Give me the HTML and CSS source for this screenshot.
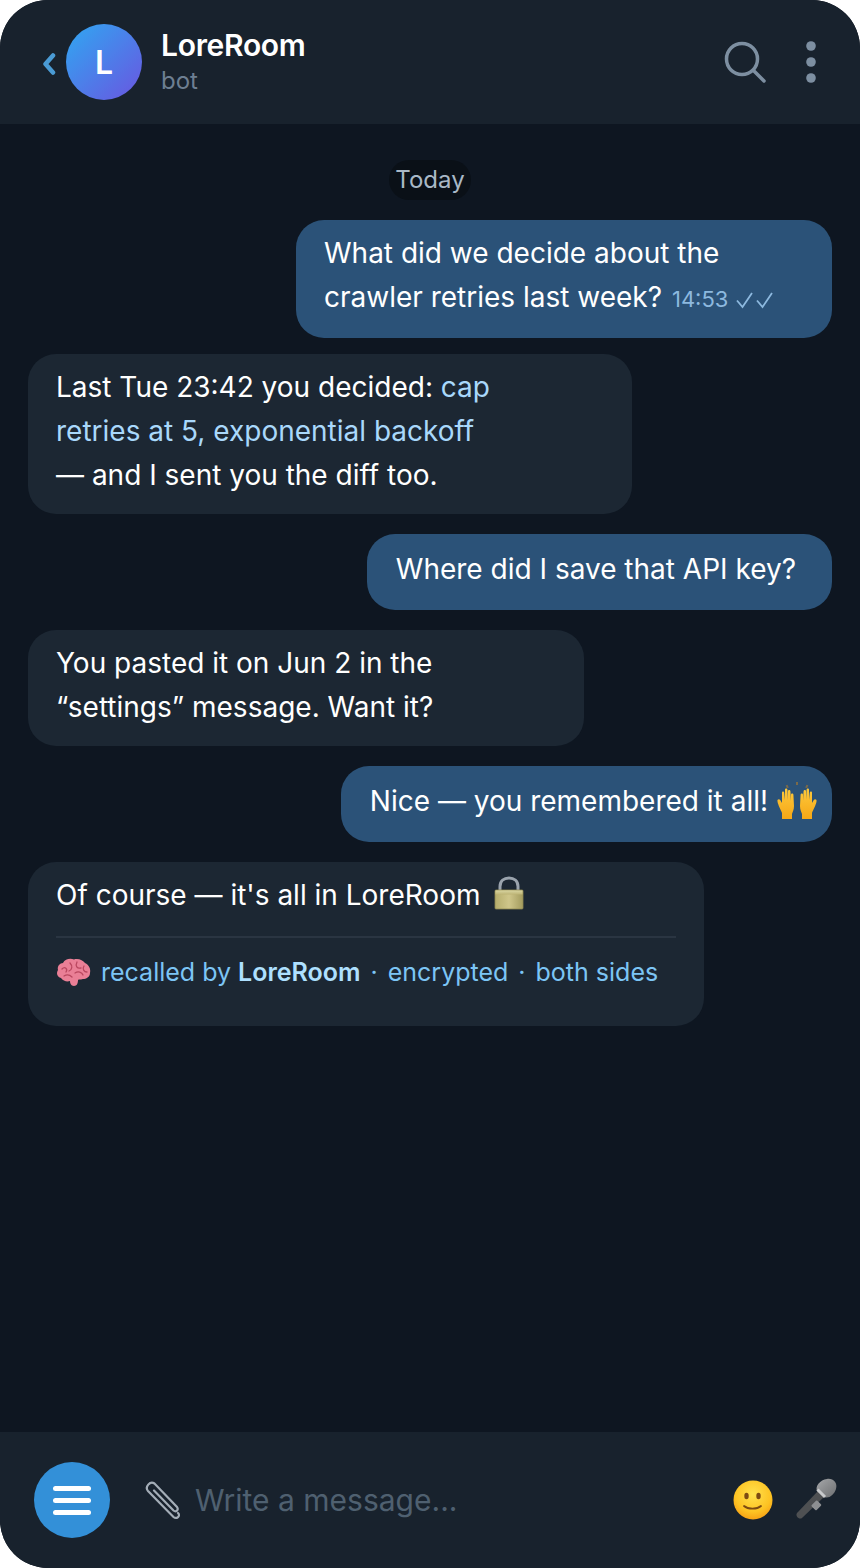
FILE: index.html
```html
<!DOCTYPE html>
<html>
<head>
<title>LoreRoom</title>
<link rel="stylesheet" href="styles.css">
</head>
<body>
<svg width="0" height="0" class="defs">
  <defs>
    <linearGradient id="lock-body" x1="0" y1="0" x2="1" y2="0">
      <stop offset="0" stop-color="#b5ad6c"/>
      <stop offset="0.5" stop-color="#cfc68a"/>
      <stop offset="1" stop-color="#a39b5e"/>
    </linearGradient>
    <linearGradient id="lock-top" x1="0" y1="0" x2="0" y2="1">
      <stop offset="0" stop-color="#d8d4a0"/>
      <stop offset="1" stop-color="#bdb475"/>
    </linearGradient>
    <radialGradient id="smile-face" cx="0.5" cy="0.35" r="0.7">
      <stop offset="0" stop-color="#ffe14d"/>
      <stop offset="0.65" stop-color="#fdc323"/>
      <stop offset="1" stop-color="#f59a12"/>
    </radialGradient>
    <linearGradient id="hand-fill" x1="0" y1="0" x2="0" y2="1">
      <stop offset="0" stop-color="#fdc93c"/>
      <stop offset="1" stop-color="#f6a716"/>
    </linearGradient>
    <linearGradient id="mic-head" x1="0" y1="0" x2="1" y2="1">
      <stop offset="0" stop-color="#a5a7a9"/>
      <stop offset="1" stop-color="#6d6f71"/>
    </linearGradient>
  </defs>
</svg>

<div class="phone">
  <div class="topbar">
    <svg class="back" width="14" height="22" viewBox="0 0 14 22">
      <path d="M11 2.5 3.5 11 11 19.500" fill="none" stroke="#4a9bd4" stroke-width="4.500" stroke-linecap="round" stroke-linejoin="round"/>
    </svg>
    <div class="avatar">L</div>
    <div class="who">
      <div class="name">LoreRoom</div>
      <div class="status">bot</div>
    </div>
    <svg class="search" width="44" height="44" viewBox="0 0 44 44">
      <circle cx="19" cy="19" r="15.500" fill="none" stroke="#7d8fa1" stroke-width="3.500"/>
      <path d="M30.500 30.500 41 41" stroke="#7d8fa1" stroke-width="3.500" stroke-linecap="round"/>
    </svg>
    <svg class="more" width="10" height="42" viewBox="0 0 10 42">
      <circle cx="5" cy="5" r="4.800" fill="#7d8fa1"/>
      <circle cx="5" cy="21" r="4.800" fill="#7d8fa1"/>
      <circle cx="5" cy="37" r="4.800" fill="#7d8fa1"/>
    </svg>
  </div>

  <div class="chat">
    <div class="day"><span class="day-pill">Today</span></div>

    <div class="msg out w-536 tight">What did we decide about the<br>crawler retries last week? <span class="time">14:53</span>
      <svg class="ticks" width="38" height="18" viewBox="0 0 38 18">
        <path d="M1 9.500 6.500 16 16 2M21 9.500 26.500 16 36 2" fill="none" stroke="#8db9df" stroke-width="1.800"/>
      </svg>
    </div>

    <div class="msg in w-604">Last Tue 23:42 you decided: <span class="link">cap<br>retries at 5, exponential backoff</span><br>— and I sent you the diff too.</div>

    <div class="msg out single">Where did I save that API key?</div>

    <div class="msg in w-556">You pasted it on Jun 2 in the<br>“settings” message. Want it?</div>

    <div class="msg out single hands-row">Nice — you remembered it all!
      <svg class="hands" width="40" height="38" viewBox="0 0 40 38">
        <g fill="#7a6a4a">
          <rect x="9" y="3" width="2" height="3" transform="rotate(-25 10 4)"/>
          <rect x="19" y="0" width="2" height="3"/>
          <rect x="29" y="3" width="2" height="3" transform="rotate(25 30 4)"/>
        </g>
        <path id="hand" fill="url(#hand-fill)" d="M5 37V31C4 28 1 23 .5 19.500 0 17.500 2 16.500 3.200 18L5 21V10.500C5 9 7 9 7.200 10.500L8 18V7.500C8 6 10.300 6 10.400 7.500L11 18V9C11 7.500 13.300 7.500 13.400 9L14 19V12.500C14 11 16.300 11 16.400 12.500L17 24C17 28 15.500 30 15 32V37Z"/>
        <path fill="url(#hand-fill)" d="M35 37V31C36 28 39 23 39.500 19.500 40 17.500 38 16.500 36.800 18L35 21V10.500C35 9 33 9 32.800 10.500L32 18V7.500C32 6 29.700 6 29.600 7.500L29 18V9C29 7.500 26.700 7.500 26.600 9L26 19V12.500C26 11 23.700 11 23.600 12.500L23 24C23 28 24.500 30 25 32V37Z"/>
      </svg>
    </div>

    <div class="msg in w-676 recall">
      <div class="recall-text">Of course — it's all in LoreRoom
        <svg class="lock" width="30" height="34" viewBox="0 0 30 34">
          <path d="M6 16V10.500C6 5 10 2 15 2S24 5 24 10.500V16" fill="none" stroke="#9aa3ad" stroke-width="3"/>
          <rect x="1" y="14" width="28" height="19" rx="1" fill="url(#lock-body)" stroke="#8f8850" stroke-width="0.800"/>
          <rect x="1.500" y="14.500" width="27" height="4" fill="url(#lock-top)"/>
        </svg>
      </div>
      <div class="recall-foot">
        <svg class="brain" width="35" height="29" viewBox="0 0 35 29">
          <path d="M5 20C1 19 0 15 2 12 1 8 4 5 7 5 9 1 14 0 18 1.500 22 0 27 2 29 5 33 7 35 11 34 15 34 19 30 21 27 21 24 22 23 21 22 22 22 25 21 28 18 28 15 28 14 25 14 23 11 24 7 23 5 20Z" fill="#ea7f96"/>
          <path d="M6 11C9 8 12 11 10 14M14 5C17 8 16 12 13 13M21 4C19 8 21 11 25 10M28 8C26 11 28 14 31 14M19 15C22 13 26 14 27 17M8 18C11 16 14 17 16 19" fill="none" stroke="#b9475f" stroke-width="1.300" stroke-linecap="round"/>
        </svg>
        <span class="recall-line">recalled by <b>LoreRoom</b><span class="sep">·</span>encrypted<span class="sep">·</span>both sides</span>
      </div>
    </div>
  </div>

  <div class="composer">
    <div class="menu-btn">
      <span class="menu-line"></span>
      <span class="menu-line"></span>
      <span class="menu-line"></span>
    </div>
    <svg class="clip" width="40" height="40" viewBox="0 0 40 40">
      <path d="M33 33C36 36 31.500 39.500 28.500 37L3 11C-.5 7 5 .5 9.500 3.500L32 27C34 30 31 32.500 28.500 30.500L9 10.500" fill="none" stroke="#a3adb7" stroke-width="2.200" stroke-linecap="round"/>
    </svg>
    <div class="placeholder">Write a message...</div>
    <svg class="smile" width="40" height="40" viewBox="0 0 40 40">
      <circle cx="20" cy="20" r="19.500" fill="url(#smile-face)"/>
      <ellipse cx="13.500" cy="16" rx="2.200" ry="3.200" fill="#7c4a12"/>
      <ellipse cx="25.500" cy="16" rx="2.200" ry="3.200" fill="#7c4a12"/>
      <path d="M11 26C15 29.500 24 29.500 28 26" fill="none" stroke="#7c4a12" stroke-width="1.800" stroke-linecap="round"/>
    </svg>
    <svg class="mic" width="44" height="44" viewBox="0 0 44 44">
      <path d="M3 36 24 14 30 20 8 41C5 43 1 39 3 36Z" fill="#4e5052"/>
      <rect x="19" y="24" width="7" height="8" rx="1" fill="#8d8f91" transform="rotate(45 22 28)"/>
      <path d="M23 14C21 9 26 3 33 2 39 1 44 6 42 12 40 18 35 22 30 20Z" fill="url(#mic-head)"/>
      <path d="M23.500 12.500 31 20" stroke="#c9cbcd" stroke-width="3"/>
    </svg>
  </div>
</div>
</body>
</html>
```

FILE: styles.css
```css
html, body {
  margin: 0;
  padding: 0;
  background: #fff;
}
.defs {
  position: absolute;
}
.phone {
  width: 860px;
  height: 1568px;
  border-radius: 48px;
  overflow: hidden;
  display: flex;
  flex-direction: column;
  background: #0e1621;
  font-family: Inter, "Liberation Sans", sans-serif;
  color: #fff;
}

/* top bar */
.topbar {
  height: 124px;
  flex: none;
  display: flex;
  align-items: center;
  background: #18222d;
  padding: 0 44px 0 42px;
  box-sizing: border-box;
}
.back {
  flex: none;
  margin: 4px 10px 0 0;
}
.avatar {
  width: 76px;
  height: 76px;
  flex: none;
  border-radius: 50%;
  background: linear-gradient(135deg, #2fa8f2, #6a55e0);
  display: flex;
  align-items: center;
  justify-content: center;
  font-size: 32px;
  font-weight: 600;
}
.who {
  margin-left: 19px;
  flex: 1;
}
.name {
  font-size: 30px;
  font-weight: 600;
  line-height: 38px;
  letter-spacing: -0.3px;
}
.status {
  font-size: 24px;
  line-height: 34px;
  color: #6d7f92;
}
.search {
  flex: none;
  margin: 0 39px 0 0;
}
.more {
  flex: none;
}

/* messages */
.chat {
  flex: 1;
  padding: 36px 28px 0;
  display: flex;
  flex-direction: column;
  align-items: flex-start;
}
.day {
  align-self: stretch;
  display: flex;
  justify-content: center;
  margin-bottom: 20px;
}
.day-pill {
  height: 40px;
  line-height: 40px;
  padding: 0 6px;
  border-radius: 20px;
  background: #0a1017;
  color: #a9b8c6;
  font-size: 24px;
}
.msg {
  box-sizing: border-box;
  font-size: 28px;
  line-height: 44px;
  padding: 11px 28px 17px;
  border-radius: 28px;
  margin-bottom: 20px;
  white-space: nowrap;
}
.msg.out {
  align-self: flex-end;
  background: #2b5278;
}
.msg.in {
  background: #1c2733;
}
.msg.tight {
  margin-bottom: 16px;
}
.w-536 { width: 536px; }
.w-604 { width: 604px; }
.w-556 { width: 556px; }
.w-676 { width: 676px; }
.msg.single {
  padding: 13px 36px 19px 29px;
}
.hands-row {
  padding-right: 15px;
  display: flex;
  align-items: center;
  gap: 9px;
}
.msg.hands-row {
  padding: 13px 15px 19px 29px;
}
.link {
  color: #a9d8fb;
}
.time {
  font-size: 22px;
  color: #8db9df;
  margin-left: 2px;
}
.ticks {
  vertical-align: -2px;
  margin-left: 0;
}
.hands {
  flex: none;
  margin-top: -1px;
}
.lock {
  vertical-align: -5px;
  margin-left: 6px;
}
.recall {
  height: 164px;
}
.recall-foot {
  border-top: 2px solid #2a3542;
  margin-top: 19px;
  padding-top: 12px;
  width: 620px;
  display: flex;
  align-items: center;
  gap: 10px;
  font-size: 25px;
  color: #7cc5f5;
}
.recall-foot b {
  color: #aee0ff;
  font-weight: 600;
}
.brain {
  flex: none;
}
.sep {
  margin: 0 10px;
}

/* bottom bar */
.composer {
  height: 136px;
  flex: none;
  display: flex;
  align-items: center;
  background: #18222d;
  padding: 0 22px 0 34px;
  box-sizing: border-box;
}
.menu-btn {
  width: 76px;
  height: 76px;
  flex: none;
  border-radius: 50%;
  background: #3390d8;
  display: flex;
  flex-direction: column;
  align-items: center;
  justify-content: center;
  gap: 7px;
}
.menu-line {
  display: block;
  width: 38px;
  height: 5px;
  border-radius: 3px;
  background: #fff;
}
.clip {
  flex: none;
  margin-left: 35px;
}
.placeholder {
  flex: 1;
  margin-left: 10px;
  font-size: 30px;
  color: #4f6070;
}
.smile {
  flex: none;
  margin-right: 21px;
}
.mic {
  flex: none;
  margin-top: -2px;
}
```
